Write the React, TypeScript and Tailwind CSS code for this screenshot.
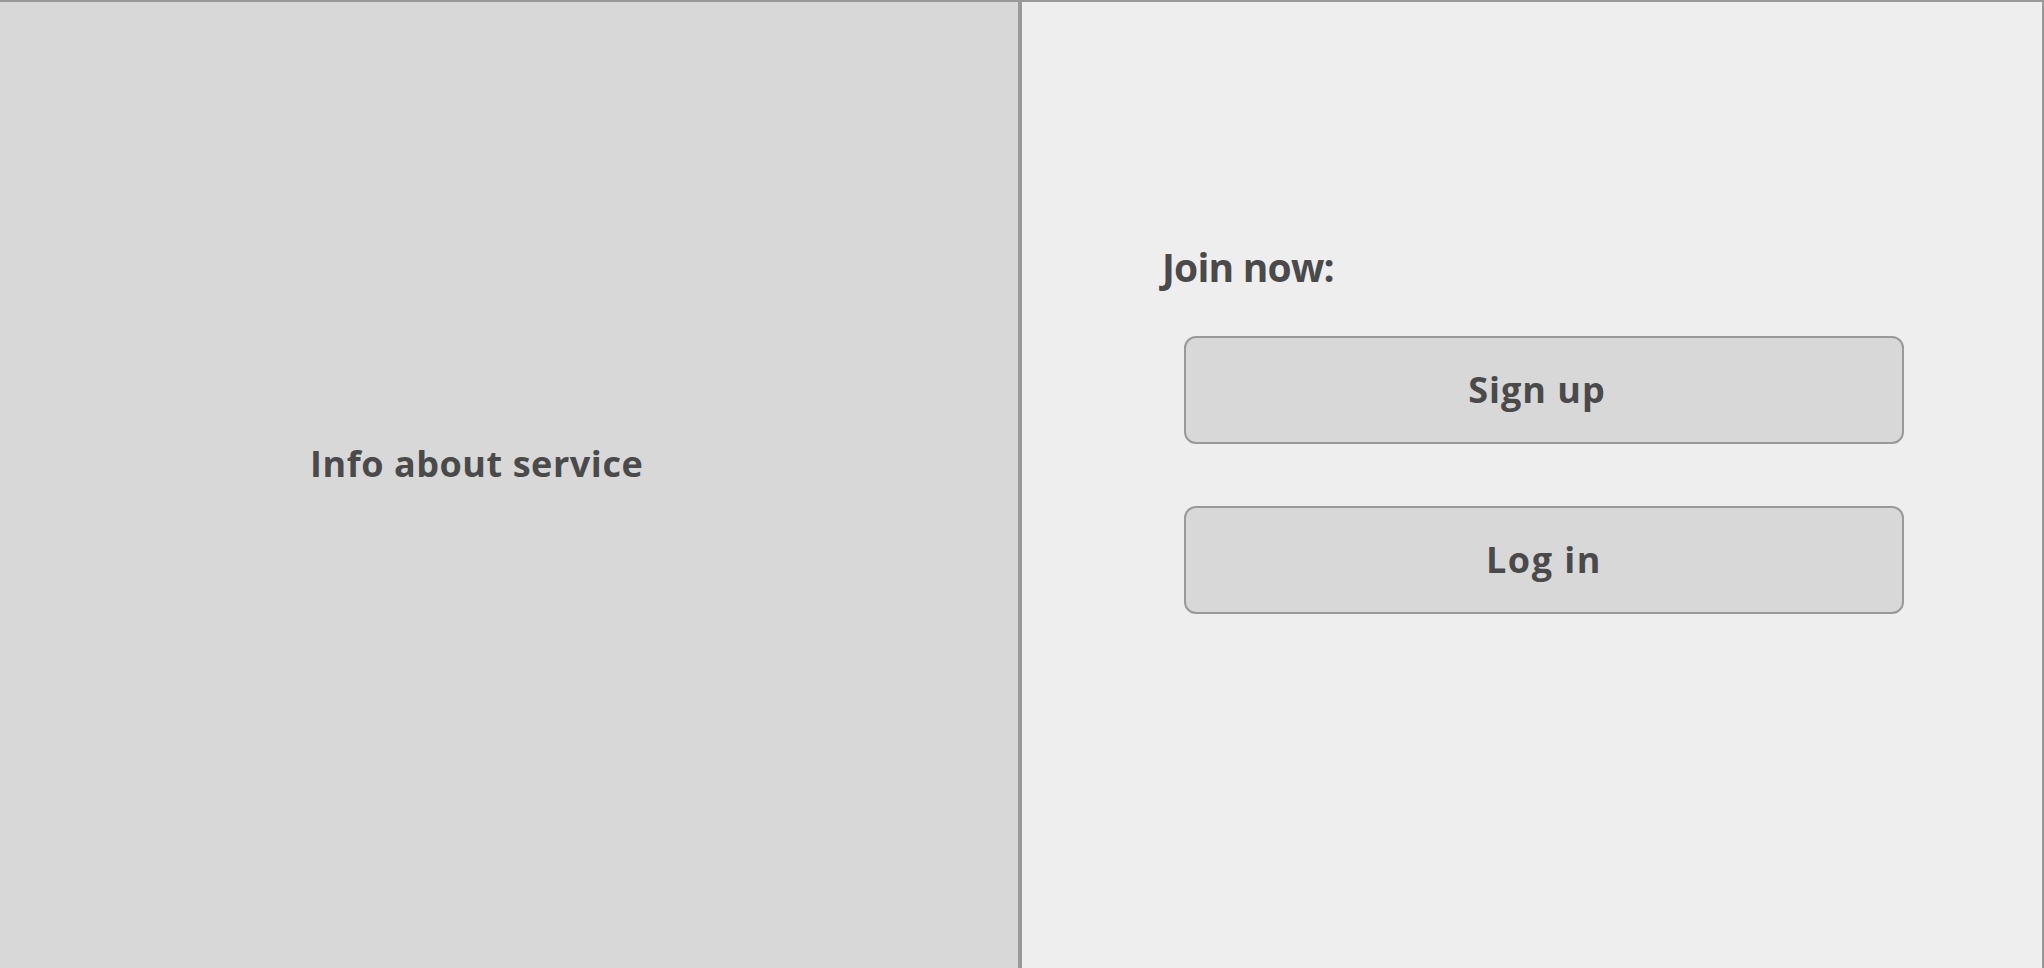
export default function App() {
  const font = { fontFamily: '"Open Sans", "DejaVu Sans", sans-serif' };
  return (
    <div className="flex h-[968px] w-full border-t-2 border-[#999999] text-[#4a4a4a]" style={font}>
      <div className="w-[1020px] shrink-0 border-r-2 border-[#999999] bg-[#d8d8d8] pl-[310px] pt-[444px]">
        <div className="text-[36px] font-bold leading-none tracking-[0.55px]">Info about service</div>
      </div>
      <div className="flex flex-1 flex-col border-l-2 border-r-2 border-[#999999] bg-[#eeeeee] pt-[245px]">
        <div className="pl-[140px] text-[39px] font-bold leading-none tracking-[-0.8px]">Join now:</div>
        <div className="ml-[162px] mt-[50px] flex flex-col gap-[62px]">
          <div className="flex h-[108px] w-[720px] items-center justify-center rounded-[12px] border-2 border-[#999999] bg-[#d8d8d8] pr-[14px] text-[36px] font-bold leading-none tracking-[1px]">
            Sign up
          </div>
          <div className="flex h-[108px] w-[720px] items-center justify-center rounded-[12px] border-2 border-[#999999] bg-[#d8d8d8] text-[36px] font-bold leading-none tracking-[1.5px]">
            Log in
          </div>
        </div>
      </div>
    </div>
  );
}
